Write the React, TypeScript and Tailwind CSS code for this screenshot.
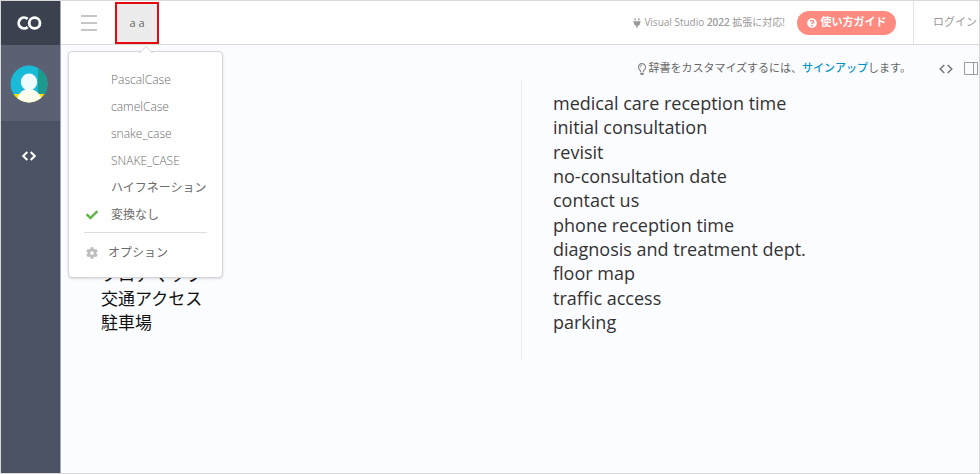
import { useState } from "react";
import { FaCheck, FaCog, FaPlug, FaQuestionCircle, FaRegLightbulb } from "react-icons/fa";

const cases = [
  { name: "PascalCase", weight: "font-light" },
  { name: "camelCase", weight: "font-light" },
  { name: "snake_case", weight: "font-light" },
  { name: "SNAKE_CASE", weight: "font-light" },
  { name: "ハイフネーション", weight: "font-normal" },
  { name: "変換なし", weight: "font-normal" },
];

const results = [
  "medical care reception time",
  "initial consultation",
  "revisit",
  "no-consultation date",
  "contact us",
  "phone reception time",
  "diagnosis and treatment dept.",
  "floor map",
  "traffic access",
  "parking",
];

const initialSource = "\n".repeat(7) + "フロアマップ\n交通アクセス\n駐車場";

function CodeIcon({ className }: { className: string }) {
  return (
    <svg viewBox="0 0 14 10" className={className} fill="none" stroke="currentColor" aria-hidden="true">
      <path d="M5.3 1 1.2 5l4.1 4M8.7 1l4.1 4-4.1 4" />
    </svg>
  );
}

function Avatar() {
  return (
    <svg viewBox="0 0 38 38" className="size-[38px]" role="img" aria-label="ユーザー">
      <defs>
        <clipPath id="avatar-circle">
          <circle cx="19" cy="19" r="18.5" />
        </clipPath>
      </defs>
      <g clipPath="url(#avatar-circle)">
        <path fill="#19bbd8" d="M0 0h38v38H0z" />
        <path fill="#1c9a8c" d="M28 0h10v29H28z" />
        <path fill="#fbdc09" d="M0 29h38v9H0z" />
        <path fill="#fffdf0" d="M7 38c0-6 2-10 5.500-12 1.500-.9 3-1.500 3.500-2.500h6c.5 1 2 1.600 3.500 2.500 3.500 2 6.500 6 6.500 12z" />
        <ellipse cx="19" cy="17" rx="8.200" ry="8.500" fill="#f0fbfd" />
      </g>
    </svg>
  );
}

function Sidebar() {
  return (
    <nav className="flex w-[60px] shrink-0 flex-col border-r border-[#a4a9b6] bg-[#4b5264]">
      <a href="#home" aria-label="ホーム" className="flex h-11 items-center justify-center bg-[#3b414f] pr-1">
        <svg viewBox="0 0 26 14" className="h-3.5 w-[26px]" fill="none" stroke="#fff" strokeWidth="2.800" aria-hidden="true">
          <path d="M11.600 11.100A5.400 5.400 0 1 1 11.600 2.900" />
          <circle cx="18.600" cy="7" r="5.400" />
        </svg>
      </a>
      <a href="#account" className="flex h-[76px] items-center justify-center bg-[#5c6073] pt-0.5 pr-1">
        <Avatar />
      </a>
      <a href="#code" aria-label="コード" className="flex h-[70px] items-center justify-center pr-1 text-white">
        <CodeIcon className="h-2.5 w-3.5 stroke-2" />
      </a>
    </nav>
  );
}

function CaseMenu() {
  const [selected, setSelected] = useState("変換なし");
  return (
    <div
      role="menu"
      className="absolute top-[50px] left-[-47px] z-10 w-[155px] rounded-sm border border-[#d6d6da] bg-white px-[15px] pt-3.5 pb-2 text-xs text-[#6c6c6c] shadow-sm"
    >
      <svg viewBox="0 0 14 7" className="absolute -top-[6px] left-[70px] h-[7px] w-3.5" aria-hidden="true">
        <path d="M0 6.500h1L7 .7l6 5.800h1" fill="#fff" stroke="#d6d6da" />
      </svg>
      {cases.map(({ name, weight }) => (
        <button
          key={name}
          type="button"
          role="menuitemradio"
          aria-checked={selected === name}
          onClick={() => setSelected(name)}
          className={`flex h-[27px] w-full items-center whitespace-nowrap ${weight}`}
        >
          <span className="w-[27px] shrink-0">
            {selected === name && <FaCheck className="ml-0.5 size-3 text-[#5eb548]" />}
          </span>
          {name}
        </button>
      ))}
      <hr className="mt-1 border-[#dedede]" />
      <button type="button" role="menuitem" className="mt-1 flex h-8 w-full items-center gap-2.5">
        <FaCog className="ml-0.5 size-3 text-[#bdbdbd]" />
        オプション
      </button>
    </div>
  );
}

function Header() {
  return (
    <header className="flex h-11 items-stretch border-b border-[#d9d9db] bg-white">
      <button type="button" aria-label="メニュー" className="ml-5 flex flex-col justify-center gap-[5px]">
        <span className="h-[2px] w-4 bg-[#c6c6c6]" />
        <span className="h-[2px] w-4 bg-[#c6c6c6]" />
        <span className="h-[2px] w-4 bg-[#c6c6c6]" />
      </button>
      <div className="relative ml-[18px] flex pt-px">
        <button type="button" aria-haspopup="menu" aria-expanded="true" className="w-11 border-2 border-[#e30b10] bg-[#ececec] text-[11px] text-[#666]">
          a a
        </button>
        <CaseMenu />
      </div>
      <div className="ml-auto flex items-center text-[11px] whitespace-nowrap text-[#999]">
        <FaPlug className="mr-0.5 size-2.5" />
        <span className="text-[10px]">
          Visual Studio <b className="font-semibold">2022</b> 拡張に対応!
        </span>
        <button type="button" className="ml-3 flex h-6 w-[99px] items-center justify-center gap-1 rounded-full bg-[#fe8a80] font-bold text-white">
          <FaQuestionCircle className="size-2.5" />
          使い方ガイド
        </button>
        <a href="#login" className="ml-[17px] flex items-center self-stretch border-l border-[#e4e4e4] pr-0.5 pl-[19px]">
          ログイン
        </a>
      </div>
    </header>
  );
}

export default function App() {
  const [source, setSource] = useState(initialSource);
  return (
    <div className="flex min-h-screen border border-[#d9d9d9] bg-[#fbfcff] font-['Open_Sans','Noto_Sans_CJK_JP',sans-serif]">
      <Sidebar />
      <div className="min-w-0 flex-1">
        <Header />
        <div className="flex h-[35px] items-center justify-end pt-3 pr-px text-[11px] whitespace-nowrap text-[#666]">
          <FaRegLightbulb className="size-3 text-[#888]" />
          <p>
            辞書をカスタマイズするには、
            <a href="#signup" className="font-medium text-[#0095c8]">サインアップ</a>
            します。
          </p>
          <button type="button" aria-label="コード表示" className="ml-7 text-[#777]">
            <CodeIcon className="h-2.5 w-3.5 stroke-[1.5]" />
          </button>
          <button type="button" aria-label="分割表示" className="ml-[11px] text-[#9a9d9c]">
            <svg viewBox="0 0 14 13" className="h-[13px] w-3.5" fill="none" stroke="currentColor" aria-hidden="true">
              <path d="M.5.5h13v12H.5zM9.500.5v12" />
            </svg>
          </button>
        </div>
        <main className="grid grid-cols-[460fr_458fr]">
          <textarea
            aria-label="原文"
            rows={10}
            spellCheck={false}
            value={source}
            onChange={(e) => setSource(e.target.value)}
            className="block h-[280px] resize-none overflow-hidden bg-transparent pt-[15px] pl-10 text-[17px] leading-6 text-[#111] outline-none"
          />
          <ul
            aria-label="変換結果"
            className="flex flex-col justify-between border-l border-[#eeeef0] pt-[11px] pb-[26px] pl-[31px] text-lg leading-6 text-[#333]"
          >
            {results.map((line) => (
              <li key={line}>{line}</li>
            ))}
          </ul>
        </main>
      </div>
    </div>
  );
}
